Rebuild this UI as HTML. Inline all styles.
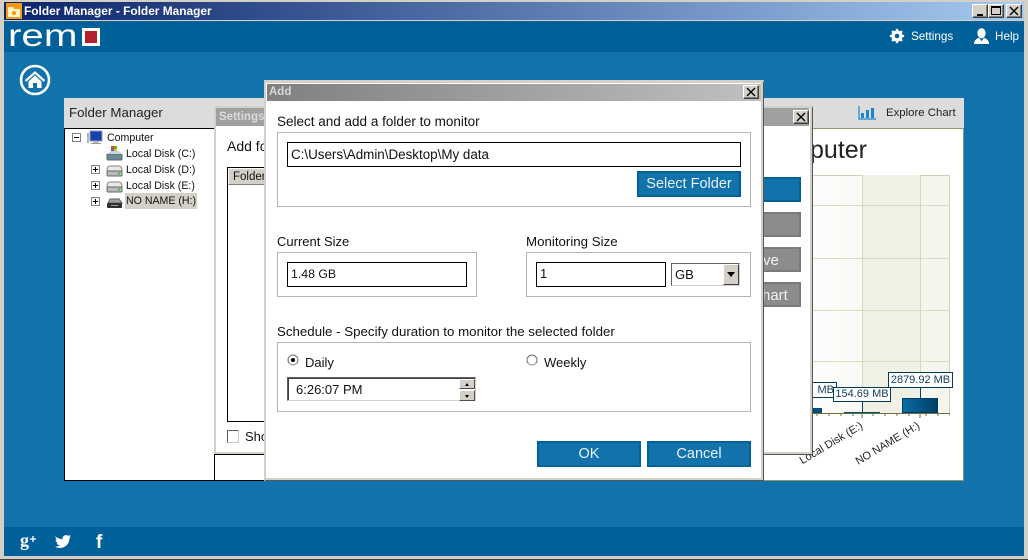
<!DOCTYPE html>
<html><head><meta charset="utf-8"><style>
html,body{margin:0;padding:0;width:1028px;height:560px;overflow:hidden;background:#d4d0c8}
body{position:relative;font-family:"Liberation Sans",sans-serif;font-size:13.5px;color:#111}
div,span,svg{position:absolute;box-sizing:border-box}
.t{white-space:nowrap;line-height:16px}
.w{color:#fff}
.gb{border:1px solid #b4b4b4;background:#fff}
.in{background:#fff;border:1px solid #000}
.btn{background:#1272ab;border:2px solid #00609a;color:#e8f2f8;font-size:14.500px;text-align:center;line-height:23px}
.gbtn{background:#8c8c8c;border:2px solid #7a7a7a;color:#f0f0f0;font-size:15px;line-height:23px}
.wb{width:16px;height:14px;background:#d4d0c8;border:1px solid;border-color:#fff #404040 #404040 #fff;box-shadow:inset -1px -1px 0 #808080}
.tr{font-size:10.600px}
</style></head><body>
<div style="left:0;top:0;width:1028px;height:560px;background:#d4d0c8"></div>
<div style="left:0;top:559px;width:1028px;height:1px;background:#404040"></div>
<div style="left:4px;top:2px;width:1020px;height:18px;background:linear-gradient(90deg,#0a246a,#a6caf0)"></div>
<svg style="left:6px;top:3px" width="16" height="16"><rect width="16" height="16" fill="#f59a12"/><path d="M2 4h5l1 2h6v8H2z" fill="#fff3c8"/><circle cx="8" cy="10" r="2" fill="#f59a12"/></svg>
<div class="t w" style="left:24px;top:3px;font-weight:bold;font-size:11.900px">Folder Manager - Folder Manager</div>
<div class="wb" style="left:972px;top:4px"><span style="left:4px;top:9px;width:6px;height:2px;background:#000"></span></div>
<div class="wb" style="left:988px;top:4px"><span style="left:2px;top:1px;width:10px;height:9px;border:1px solid #000;border-top-width:2px"></span></div>
<div class="wb" style="left:1006px;top:4px"><svg style="left:2px;top:1px" width="10" height="10"><path d="M1 1l8 8M9 1l-8 8" stroke="#000" stroke-width="1.400"/></svg></div>

<div style="left:4px;top:21px;width:1020px;height:535px;background:#1272ab"></div>
<div style="left:4px;top:21px;width:1020px;height:31px;background:#00609a"></div>
<div style="left:4px;top:527px;width:1020px;height:29px;background:#00609a"></div>

<svg style="left:8px;top:24px" width="96" height="26" aria-label="remo">
<text x="0" y="0" transform="translate(0 22) scale(1.680 1.300)" font-family="Liberation Sans" font-size="24" fill="#fff">rem</text>
<rect x="75.500" y="5.500" width="15" height="15" fill="#b5202e" stroke="#fff" stroke-width="3"/>
</svg>

<svg style="left:889px;top:28px" width="16" height="16" viewBox="0 0 18 18"><circle cx="9" cy="9" r="4.600" fill="none" stroke="#fff" stroke-width="3.400"/><path d="M9 1v16M1 9h16M3.400 3.400l11.200 11.200M14.600 3.400L3.400 14.600" stroke="#fff" stroke-width="2.600"/><circle cx="9" cy="9" r="2.600" fill="#00609a"/></svg>
<div class="t w" style="left:911px;top:29px;font-size:11.700px">Settings</div>
<svg style="left:974px;top:28px" width="15" height="17" viewBox="0 0 16 18"><ellipse cx="8" cy="5.500" rx="4.400" ry="5.500" fill="#fff"/><path d="M0 17c0-4 3-6 5.500-6.500L8 14l2.500-3.500C13 11 16 13 16 17z" fill="#fff"/></svg>
<div class="t w" style="left:995px;top:29px;font-size:11.700px">Help</div>

<svg style="left:19px;top:64px" width="32" height="32" viewBox="0 0 32 32"><circle cx="16" cy="16" r="14" fill="none" stroke="#fff" stroke-width="2.600"/><path d="M6.500 17L16 8.500 25.500 17" fill="none" stroke="#fff" stroke-width="2.200"/><path d="M9.500 17.500L16 11.500l6.500 6v6.500h-4.500v-5h-4v5H9.500z" fill="#fff"/></svg>

<svg style="left:20px;top:534px" width="16" height="16" viewBox="0 0 16 16"><text x="0" y="12" font-family="Liberation Serif" font-weight="bold" font-size="18" fill="#fff">g</text><path d="M10 5h6M13 2v6" stroke="#fff" stroke-width="1.300"/></svg>
<svg style="left:55px;top:534px" width="16" height="14" viewBox="0 0 16 14"><path d="M0 2c2 2 4.500 3 7.500 3.200C7.200 2 10.500 0 13 1.800L15.500 1l-1.200 2L16 2.600l-1.600 1.800C14.500 10 10 14 5 14c-2 0-3.600-.5-5-1.400 1.800.2 3.400-.3 4.700-1.300-1.400 0-2.500-1-3-2.200h1.400C1.500 8.600.6 7.300.6 5.800l1.400.4C.8 5.200.3 3.500 1 2z" fill="#fff"/></svg>
<div class="t w" style="left:96px;top:533px;font:bold 19px/20px 'Liberation Sans',sans-serif">f</div>

<!-- Folder manager panel -->
<div style="left:64px;top:98px;width:900px;height:383px;background:#dcdcdc"></div>
<div class="t" style="left:69px;top:105px;font-size:13.300px;color:#222">Folder Manager</div>
<svg style="left:858px;top:105px" width="20" height="16"><path d="M1 1v13h17" fill="none" stroke="#1a86d0" stroke-width="1.200"/><rect x="3" y="8" width="3" height="5" fill="#1a86d0"/><rect x="8" y="5" width="3" height="8" fill="#1a86d0"/><rect x="13" y="3" width="3" height="10" fill="#1a86d0"/></svg>
<div class="t" style="left:886px;top:105px;font-size:11.400px;color:#222">Explore Chart</div>
<div style="left:213px;top:128px;width:751px;height:353px;background:#fff;border:1px solid #8a9a6a"></div>
<div class="t" style="left:700px;top:135px;width:167px;text-align:right;font-size:25px;line-height:30px;color:#222">Computer</div>

<!-- chart -->
<div style="left:780px;top:175px;width:170px;height:238px;background:linear-gradient(90deg,#fff,#f4f4ec);border:1px solid #cfd2b0;border-bottom:0"></div>
<div style="left:862px;top:175px;width:58px;height:238px;background:#f0f0e4"></div>
<div style="left:862px;top:175px;width:1px;height:238px;background:#d6d8b8"></div>
<div style="left:920px;top:175px;width:1px;height:238px;background:#d6d8b8"></div>
<div style="left:780px;top:205px;width:170px;height:1px;background:#dadcc0"></div>
<div style="left:780px;top:258px;width:170px;height:1px;background:#dadcc0"></div>
<div style="left:780px;top:310px;width:170px;height:1px;background:#dadcc0"></div>
<div style="left:780px;top:361px;width:170px;height:1px;background:#dadcc0"></div>
<div style="left:780px;top:413px;width:170px;height:1px;background:#6e6e3c"></div>
<svg style="left:780px;top:414px" width="170" height="5"><path d="M37 0v2M49 0v2M61 0v2M73 0v2M93 0v2M105 0v2M117 0v2M129 0v2M146 0v2M158 0v2M170 0v2M82 0v4M140 0v4" stroke="#6e6e3c"/></svg>
<div style="left:790px;top:408px;width:32px;height:5px;background:#004d7c"></div>
<div style="left:844px;top:412px;width:36px;height:1px;background:#004d7c"></div>
<div style="left:902px;top:398px;width:36px;height:15px;background:linear-gradient(90deg,#086ca4,#003f66);border:1px solid #003a5c"></div>
<div style="left:862px;top:400px;width:1px;height:12px;background:#004468"></div>
<div style="left:920px;top:387px;width:1px;height:11px;background:#004468"></div>
<div class="t" style="left:780px;top:382px;width:57px;height:16px;background:#fff;border:1px solid #003a5c;font-size:11px;line-height:14px;text-align:right;padding-right:2px;color:#123a5c">MB</div>
<div class="t" style="left:833px;top:387px;width:58px;height:15px;background:#fff;border:1px solid #003a5c;font-size:11px;line-height:13px;text-align:center;color:#123a5c">154.69 MB</div>
<div class="t" style="left:888px;top:372px;width:65px;height:16px;background:#fff;border:1px solid #003a5c;font-size:11px;line-height:14px;text-align:center;color:#123a5c">2879.92 MB</div>
<div class="t" style="left:776px;top:417px;width:86px;text-align:right;font-size:11px;transform:rotate(-31deg);transform-origin:100% 50%;color:#222">Local Disk (E:)</div>
<div class="t" style="left:833px;top:417px;width:86px;text-align:right;font-size:11px;transform:rotate(-31deg);transform-origin:100% 50%;color:#222">NO NAME (H:)</div>

<!-- tree -->
<div style="left:64px;top:128px;width:151px;height:353px;background:#fff;border:1px solid #000"></div>
<svg style="left:72px;top:132px" width="36" height="78" fill="none"><rect x="0.500" y="1.500" width="8" height="8" stroke="#808080" fill="#fff"/><path d="M2 5.500h5" stroke="#000"/></svg>
<svg style="left:91px;top:161px" width="9" height="48"><g fill="#fff" stroke="#808080"><rect x=".5" y="4.500" width="8" height="8"/><rect x=".5" y="20.500" width="8" height="8"/><rect x=".5" y="36.500" width="8" height="8"/></g><path d="M2 8.500h5M4.500 6v5M2 24.500h5M4.500 22v5M2 40.500h5M4.500 38v5" stroke="#000"/></svg>
<svg style="left:87px;top:130px" width="16" height="15"><rect x="3" y="1" width="12" height="10" fill="#1a3fb0" stroke="#8a9aa8"/><rect x="0" y="3" width="2" height="10" fill="#a8b8b8"/><rect x="6" y="11" width="6" height="2" fill="#bbb"/><rect x="4" y="13" width="10" height="1" fill="#999"/></svg>
<div class="t tr" style="left:107px;top:130px">Computer</div>
<svg style="left:106px;top:145px" width="18" height="16"><rect x="1" y="9" width="15" height="6" rx="1" fill="#6a8a9a" stroke="#5a6a70"/><rect x="5" y="1" width="3" height="3" fill="#e04a20"/><rect x="8" y="1" width="3" height="3" fill="#6ab030"/><rect x="5" y="4" width="3" height="3" fill="#3a70d0"/><rect x="8" y="4" width="3" height="3" fill="#f0c020"/><path d="M2 9l3-3h8l3 3z" fill="#c8d4dc"/></svg>
<svg style="left:106px;top:164px" width="18" height="13"><path d="M1 7Q1 2 4 2h9q3 0 3 5z" fill="#e8e8e8" stroke="#888"/><rect x="1" y="7" width="15" height="5" rx="1" fill="#b8bcb8" stroke="#606468"/><rect x="12" y="8.500" width="2" height="2" fill="#40c040"/></svg>
<svg style="left:106px;top:180px" width="18" height="13"><path d="M1 7Q1 2 4 2h9q3 0 3 5z" fill="#e8e8e8" stroke="#888"/><rect x="1" y="7" width="15" height="5" rx="1" fill="#b8bcb8" stroke="#606468"/><rect x="12" y="8.500" width="2" height="2" fill="#40c040"/></svg>
<svg style="left:106px;top:196px" width="18" height="13"><path d="M2 7l2-4h9l3 4z" fill="#a0a0a0" stroke="#666"/><rect x="1" y="7" width="15" height="5" rx="1" fill="#303030"/><rect x="5" y="9" width="7" height="1" fill="#999"/></svg>
<div class="t tr" style="left:126px;top:146px">Local Disk (C:)</div>
<div class="t tr" style="left:126px;top:162px">Local Disk (D:)</div>
<div class="t tr" style="left:126px;top:178px">Local Disk (E:)</div>
<div class="t tr" style="left:125px;top:193px;width:72px;height:16px;background:#d4d0c8;padding-left:1px;line-height:17px">NO NAME (H:)</div>

<!-- settings dialog -->
<div style="left:214px;top:106px;width:599px;height:349px;background:#fff;border:2px solid #d4d0c8;border-right:1px solid #555;border-bottom:1px solid #555;box-shadow:inset -2px -2px 0 #d4d0c8"></div>
<div style="left:216px;top:108px;width:593px;height:18px;background:#a0a0a0"></div>
<div class="t" style="left:219px;top:109px;font-weight:bold;font-size:11.500px;color:#dcdcdc">Settings</div>
<div class="wb" style="left:793px;top:110px"><svg style="left:2px;top:1px" width="10" height="10"><path d="M1 1l8 8M9 1l-8 8" stroke="#000" stroke-width="1.400"/></svg></div>
<div class="t" style="left:227px;top:138px;font-size:14px">Add fo</div>
<div style="left:227px;top:167px;width:60px;height:255px;background:#fff;border:1px solid #000"></div>
<div class="t" style="left:228px;top:168px;width:50px;height:17px;background:#d4d0c8;padding-left:4px;font-size:11.500px;border:1px solid;border-color:#fff #808080 #808080 #fff">Folder</div>
<div style="left:227px;top:430px;width:12px;height:13px;background:#fff;border:1px solid;border-color:#606060 #c8c8c8 #c8c8c8 #606060"></div>
<div class="t" style="left:245px;top:429px;font-size:13px">Sho</div>
<div style="left:214px;top:454px;width:50px;height:27px;background:#fff;border-top:1px solid #000;border-left:1px solid #000;border-bottom:1px solid #000"></div>
<div class="btn" style="left:760px;top:177px;width:41px;height:25px;text-align:right"></div>
<div class="gbtn" style="left:760px;top:212px;width:41px;height:25px"></div>
<div class="gbtn" style="left:760px;top:247px;width:41px;height:25px"><span style="left:1px;top:0">ve</span></div>
<div class="gbtn" style="left:760px;top:282px;width:41px;height:25px"><span style="left:0;top:0">hart</span></div>

<!-- Add dialog -->
<div style="left:264px;top:80px;width:500px;height:401px;background:#fff;border:2px solid #d4d0c8;border-top-width:3px;border-right:1px solid #555;border-bottom:1px solid #555;box-shadow:inset -2px -2px 0 #d4d0c8"></div>
<div style="left:267px;top:84px;width:494px;height:17px;background:linear-gradient(90deg,#808080,#c0c0c0)"></div>
<div class="t" style="left:269px;top:84px;font-weight:bold;font-size:11.500px;color:#d8d8d8">Add</div>
<div class="wb" style="left:743px;top:85px"><svg style="left:2px;top:1px" width="10" height="10"><path d="M1 1l8 8M9 1l-8 8" stroke="#000" stroke-width="1.400"/></svg></div>

<div class="t" style="left:277px;top:114px">Select and add a folder to monitor</div>
<div class="gb" style="left:277px;top:132px;width:474px;height:75px"></div>
<div class="in" style="left:287px;top:142px;width:454px;height:25px"></div>
<div class="t" style="left:291px;top:147px;font-size:13.400px">C:\Users\Admin\Desktop\My data</div>
<div class="btn" style="left:637px;top:171px;width:104px;height:26px">Select Folder</div>

<div class="t" style="left:277px;top:234px;font-size:13px">Current Size</div>
<div class="gb" style="left:277px;top:252px;width:200px;height:45px"></div>
<div class="in" style="left:287px;top:262px;width:180px;height:25px"></div>
<div class="t" style="left:291px;top:266px;font-size:12.300px">1.48 GB</div>

<div class="t" style="left:526px;top:234px;font-size:13.300px">Monitoring Size</div>
<div class="gb" style="left:526px;top:252px;width:225px;height:45px"></div>
<div class="in" style="left:536px;top:262px;width:130px;height:25px"></div>
<div class="t" style="left:540px;top:266px;font-size:13px">1</div>
<div style="left:671px;top:263px;width:69px;height:23px;background:#fff;border:1px solid;border-color:#606060 #d4d0c8 #d4d0c8 #606060"></div>
<div class="t" style="left:675px;top:267px;font-size:13px">GB</div>
<div style="left:723px;top:264px;width:16px;height:21px;background:#d4d0c8;border:1px solid;border-color:#fff #404040 #404040 #fff"><span style="left:3px;top:7px;width:0;height:0;border:4px solid transparent;border-top:5px solid #000;border-bottom:0"></span></div>

<div class="t" style="left:277px;top:324px;font-size:13.300px">Schedule - Specify duration to monitor the selected folder</div>
<div class="gb" style="left:277px;top:342px;width:474px;height:70px"></div>
<svg style="left:287px;top:354px" width="12" height="12"><circle cx="6" cy="6" r="5" fill="#fff" stroke="#707070"/><path d="M2 9.500A5 5 0 0 0 10 9.500" fill="none" stroke="#ddd"/><circle cx="6" cy="6" r="2" fill="#000"/></svg>
<div class="t" style="left:305px;top:355px;font-size:13px">Daily</div>
<svg style="left:526px;top:354px" width="12" height="12"><circle cx="6" cy="6" r="5" fill="#fff" stroke="#707070"/><path d="M2 9.500A5 5 0 0 0 10 9.500" fill="none" stroke="#ddd"/></svg>
<div class="t" style="left:544px;top:355px;font-size:13px">Weekly</div>
<div style="left:287px;top:377px;width:189px;height:24px;background:#fff;border:1px solid;border-color:#606060 #d4d0c8 #d4d0c8 #606060;box-shadow:inset 1px 1px 0 #404040"></div>
<div class="t" style="left:296px;top:382px;font-size:13px">6:26:07 PM</div>
<div style="left:459px;top:379px;width:16px;height:10px;background:#d4d0c8;border:1px solid;border-color:#fff #505050 #505050 #fff"><span style="left:5px;top:3px;width:0;height:0;border:2.500px solid transparent;border-bottom:3px solid #000;border-top:0"></span></div>
<div style="left:459px;top:390px;width:16px;height:11px;background:#d4d0c8;border:1px solid;border-color:#fff #505050 #505050 #fff"><span style="left:5px;top:4px;width:0;height:0;border:2.500px solid transparent;border-top:3px solid #000;border-bottom:0"></span></div>

<div class="btn" style="left:537px;top:441px;width:104px;height:26px">OK</div>
<div class="btn" style="left:647px;top:441px;width:104px;height:26px">Cancel</div>
</body></html>
